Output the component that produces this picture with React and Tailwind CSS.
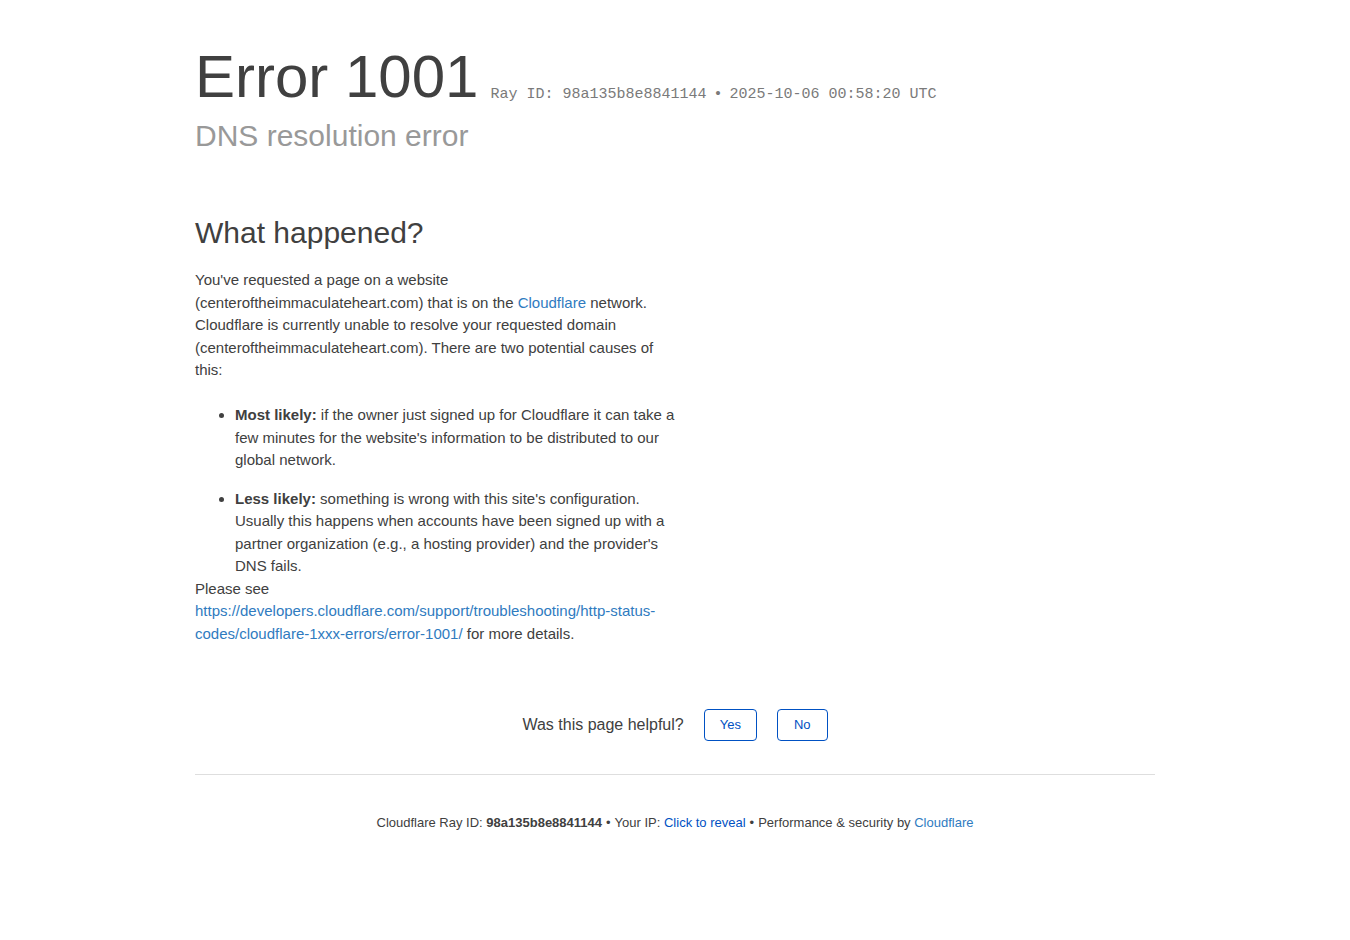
export default function App() {
  return (
    <div className="min-h-screen bg-white text-[#404040]" style={{ fontFamily: '"Liberation Sans", Arial, sans-serif' }}>
      <div className="w-[960px] mx-auto pt-[47px] pb-10">
        <header>
          <div className="flex items-baseline">
            <h1 className="text-[60px] leading-[60px] font-normal text-[#404040]">Error 1001</h1>
            <span
              className="ml-[12px] text-[15px] text-[#7a7a7a] whitespace-nowrap translate-y-[1px]"
              style={{ fontFamily: '"Liberation Mono", "Courier New", monospace' }}
            >
              Ray ID: 98a135b8e8841144<span className="inline-block w-[23px] text-center">•</span>2025-10-06 00:58:20 UTC
            </span>
          </div>
          <h2 className="mt-[14px] text-[30px] leading-[30px] text-[#999999]">DNS resolution error</h2>
        </header>

        <section className="w-[480px] mt-[67px] text-[15px] leading-[22.5px]">
          <h2 className="text-[30px] leading-[30px] text-[#404040]">What happened?</h2>
          <p className="mt-[21px]">
            You've requested a page on a website (centeroftheimmaculateheart.com) that is on the{' '}
            <a href="#" className="text-[#2f7bbf]">Cloudflare</a> network. Cloudflare is currently unable to resolve your
            requested domain (centeroftheimmaculateheart.com). There are two potential causes of this:
          </p>
          <ul className="mt-[22.5px] pl-[40px] list-disc">
            <li>
              <span className="font-bold">Most likely:</span> if the owner just signed up for Cloudflare it can take a few
              minutes for the website's information to be distributed to our global network.
            </li>
            <li className="mt-[16px]">
              <span className="font-bold">Less likely:</span> something is wrong with this site's configuration. Usually
              this happens when accounts have been signed up with a partner organization (e.g., a hosting provider) and
              the provider's DNS fails.
            </li>
          </ul>
          <p>
            Please see{' '}
            <a href="#" className="text-[#2f7bbf] break-words">
              https://developers.cloudflare.com/support/troubleshooting/http-status-codes/cloudflare-1xxx-errors/error-1001/
            </a>{' '}
            for more details.
          </p>
        </section>

        <div className="mt-[64px] flex items-center justify-center">
          <span className="text-[16px] text-[#404040]">Was this page helpful?</span>
          <button className="ml-[20px] h-[32px] px-[15px] border border-[#0051c3] rounded-[4px] text-[13px] text-[#0051c3] bg-white">
            Yes
          </button>
          <button className="ml-[20px] h-[32px] px-[16px] border border-[#0051c3] rounded-[4px] text-[13px] text-[#0051c3] bg-white">
            No
          </button>
        </div>

        <footer className="mt-[33px] border-t border-[#dedede] pt-[38px] text-center text-[13px] leading-[19.5px] text-[#404040]">
          Cloudflare Ray ID: <span className="font-bold">98a135b8e8841144</span>
          <span className="mx-[4px]">•</span>
          Your IP: <a href="#" className="text-[#0051c3]">Click to reveal</a>
          <span className="mx-[4px]">•</span>
          Performance &amp; security by <a href="#" className="text-[#2f7bbf]">Cloudflare</a>
        </footer>
      </div>
    </div>
  )
}
